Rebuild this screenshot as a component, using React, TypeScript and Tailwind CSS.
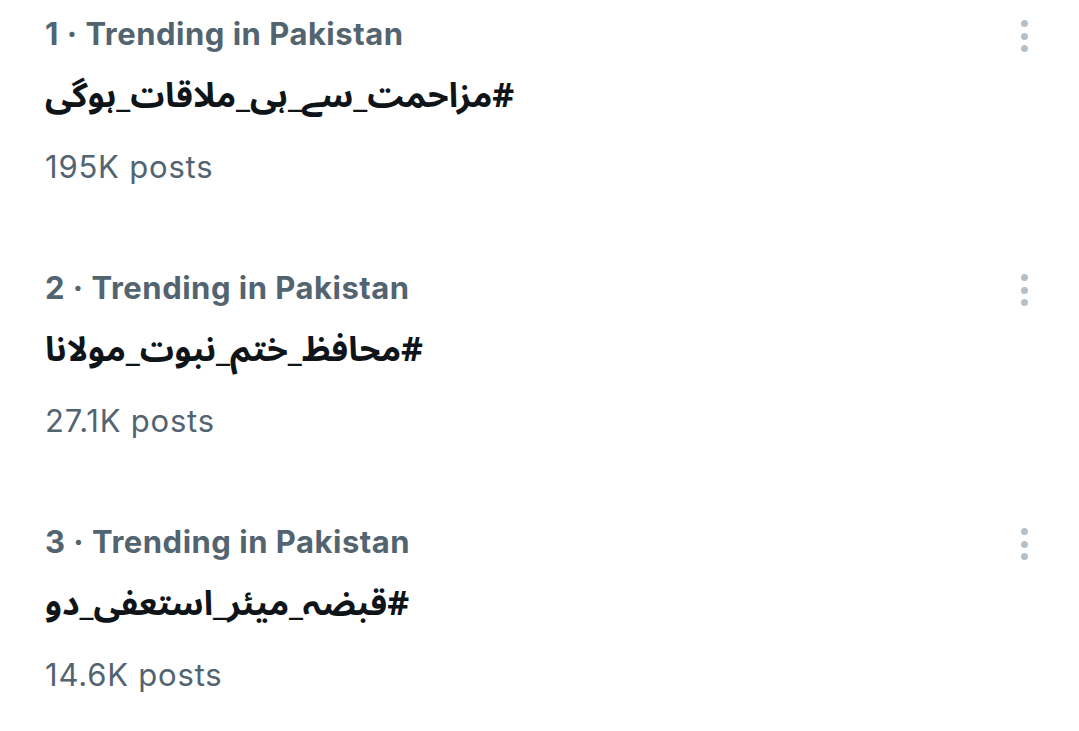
const trends = [
  { rank: 1, tag: "#مزاحمت_سے_ہی_ملاقات_ہوگی", posts: "195K posts" },
  { rank: 2, tag: "#محافظ_ختم_نبوت_مولانا", posts: "27.1K posts" },
  { rank: 3, tag: "#قبضہ_میئر_استعفی_دو", posts: "14.6K posts" },
];

function Dots() {
  return (
    <div className="flex flex-col items-center gap-[5.5px] pt-[20px] pr-[51px]">
      <span className="block w-[7px] h-[7px] rounded-full bg-[#b3c0c9]" />
      <span className="block w-[7px] h-[7px] rounded-full bg-[#b3c0c9]" />
      <span className="block w-[7px] h-[7px] rounded-full bg-[#b3c0c9]" />
    </div>
  );
}

export default function App() {
  return (
    <div className="w-[1079px] h-[731px] bg-white overflow-hidden font-['Inter','Liberation_Sans',sans-serif]">
      {trends.map((t) => (
        <div key={t.rank} className="flex justify-between h-[254px] pl-[45px]">
          <div className="flex flex-col pt-[16px]">
            <div className="text-[31px] leading-[36px] font-bold text-[#536471] tracking-[0.5px]">
              {t.rank} · Trending in Pakistan
            </div>
            <div className="mt-[21px] text-[34px] leading-[46px] font-bold text-[#0f1419] text-left font-['Noto_Sans_Arabic','DejaVu_Sans',sans-serif]">
              <span dir="rtl">{t.tag}</span>
            </div>
            <div className="mt-[30px] text-[31px] leading-[36px] text-[#536471] tracking-[0.8px]">
              {t.posts}
            </div>
          </div>
          <Dots />
        </div>
      ))}
    </div>
  );
}
